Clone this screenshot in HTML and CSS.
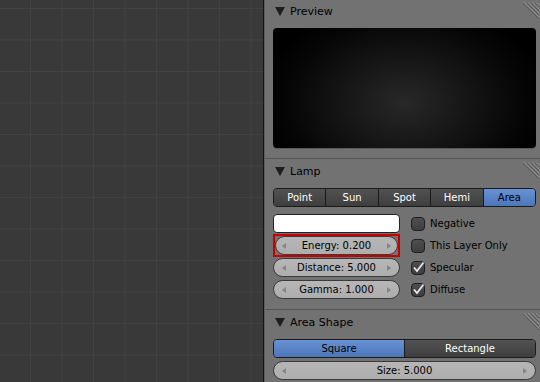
FILE: index.html
```html
<!DOCTYPE html>
<html>
<head>
    <meta charset="utf-8">
    <title>lamp-properties</title>
    <link rel="stylesheet" href="styles.css">
</head>
<body>
<div class="screen">
    <div class="viewport"></div>

    <div class="props">
        <!--Preview-->
        <section class="panel">
            <div class="panel-head">
                <svg class="tri" width="10" height="9" viewBox="0 0 10 9"><polygon points="0,0 10,0 5,9" fill="#1e1e1e"/></svg>
                <span>Preview</span>
                <svg class="hatch" width="18" height="17" viewBox="0 0 18 17">
                    <g stroke="#8e8e8e" stroke-width="1">
                        <line x1="2" y1="0" x2="18" y2="16"/>
                        <line x1="6" y1="0" x2="18" y2="12"/>
                        <line x1="10" y1="0" x2="18" y2="8"/>
                        <line x1="14" y1="0" x2="18" y2="4"/>
                    </g>
                    <g stroke="#5c5c5c" stroke-width="1">
                        <line x1="1" y1="1" x2="17" y2="17"/>
                        <line x1="5" y1="1" x2="17" y2="13"/>
                        <line x1="9" y1="1" x2="17" y2="9"/>
                        <line x1="13" y1="1" x2="17" y2="5"/>
                    </g>
                </svg>
            </div>
            <div class="preview"></div>
        </section>

        <!--Lamp-->
        <section class="panel lamp">
            <div class="panel-head">
                <svg class="tri" width="10" height="9" viewBox="0 0 10 9"><polygon points="0,0 10,0 5,9" fill="#1e1e1e"/></svg>
                <span>Lamp</span>
                <svg class="hatch" width="18" height="17" viewBox="0 0 18 17">
                    <g stroke="#8e8e8e" stroke-width="1">
                        <line x1="2" y1="0" x2="18" y2="16"/>
                        <line x1="6" y1="0" x2="18" y2="12"/>
                        <line x1="10" y1="0" x2="18" y2="8"/>
                        <line x1="14" y1="0" x2="18" y2="4"/>
                    </g>
                    <g stroke="#5c5c5c" stroke-width="1">
                        <line x1="1" y1="1" x2="17" y2="17"/>
                        <line x1="5" y1="1" x2="17" y2="13"/>
                        <line x1="9" y1="1" x2="17" y2="9"/>
                        <line x1="13" y1="1" x2="17" y2="5"/>
                    </g>
                </svg>
            </div>
            <div class="tabs">
                <div class="tab">Point</div>
                <div class="tab">Sun</div>
                <div class="tab">Spot</div>
                <div class="tab">Hemi</div>
                <div class="tab on">Area</div>
            </div>
            <div class="lamp-grid">
                <div class="color"></div>
                <label class="opt"><span class="box"></span>Negative</label>

                <div class="hot">
                    <div class="num"><span class="arr-l"></span><span class="val">Energy: 0.200</span><span class="arr-r"></span></div>
                </div>
                <label class="opt"><span class="box"></span>This Layer Only</label>

                <div class="num"><span class="arr-l"></span><span class="val">Distance: 5.000</span><span class="arr-r"></span></div>
                <label class="opt"><span class="box"><svg width="14" height="14" viewBox="0 0 14 14"><path d="M3 6.5 L6 10 L12.5 1.5" fill="none" stroke="#e6e6e6" stroke-width="1.8"/></svg></span>Specular</label>

                <div class="num"><span class="arr-l"></span><span class="val">Gamma: 1.000</span><span class="arr-r"></span></div>
                <label class="opt"><span class="box"><svg width="14" height="14" viewBox="0 0 14 14"><path d="M3 6.5 L6 10 L12.5 1.5" fill="none" stroke="#e6e6e6" stroke-width="1.8"/></svg></span>Diffuse</label>
            </div>
        </section>

        <!--Area Shape-->
        <section class="panel">
            <div class="panel-head">
                <svg class="tri" width="10" height="9" viewBox="0 0 10 9"><polygon points="0,0 10,0 5,9" fill="#1e1e1e"/></svg>
                <span>Area Shape</span>
                <svg class="hatch" width="18" height="17" viewBox="0 0 18 17">
                    <g stroke="#8e8e8e" stroke-width="1">
                        <line x1="2" y1="0" x2="18" y2="16"/>
                        <line x1="6" y1="0" x2="18" y2="12"/>
                        <line x1="10" y1="0" x2="18" y2="8"/>
                        <line x1="14" y1="0" x2="18" y2="4"/>
                    </g>
                    <g stroke="#5c5c5c" stroke-width="1">
                        <line x1="1" y1="1" x2="17" y2="17"/>
                        <line x1="5" y1="1" x2="17" y2="13"/>
                        <line x1="9" y1="1" x2="17" y2="9"/>
                        <line x1="13" y1="1" x2="17" y2="5"/>
                    </g>
                </svg>
            </div>
            <div class="tabs">
                <div class="tab on">Square</div>
                <div class="tab">Rectangle</div>
            </div>
            <div class="num size"><span class="arr-l"></span><span class="val">Size: 5.000</span><span class="arr-r"></span></div>
        </section>
    </div>
</div>
</body>
</html>
```
FILE: styles.css
```css
body{
    margin:0;
    background:#727272;
    font-family:"DejaVu Sans", "Liberation Sans", sans-serif;
    font-size:10px;
    color:#000;
    overflow:hidden;
}
.screen{
    display:flex;
    height:382px;
    overflow:hidden;
}
/*3D view grid*/
.viewport{
    width:263px;
    flex:none;
    border-right:1px solid #141414;
    background-color:#393939;
    background-image:
        linear-gradient(to right, #424242 1px, transparent 1px),
        linear-gradient(to bottom, #424242 1px, transparent 1px);
    background-size:31.5px 31.5px;
    background-position:30px 8px;
}
.props{
    flex:1;
    border-left:1px solid #5e5e5e;
    margin-top:-2px;
}
/*panels*/
.panel{
    border-top:1px solid #545454;
    padding:0 4px 10px 8px;
}
.panel.lamp{
    padding-bottom:10px;
}
.panel-head{
    display:flex;
    align-items:center;
    height:24px;
    margin-bottom:5px;
    font-size:11px;
    color:#000;
}
.tri{
    margin-left:2px;
    margin-right:5px;
}
.hatch{
    margin-left:auto;
    margin-right:-4px;
    align-self:flex-start;
    margin-top:3px;
}
.preview{
    height:120px;
    border-radius:4px;
    background:radial-gradient(ellipse 55% 85% at 50% 62%, #282828 0%, #151515 45%, #060606 80%, #000 100%);
    box-shadow:0 1px 0 #5a5a5a;
}
/*radio tabs*/
.tabs{
    display:flex;
    height:19px;
    border:1px solid #1a1a1a;
    border-radius:4px;
    overflow:hidden;
    box-sizing:border-box;
}
.tab{
    flex:1;
    display:flex;
    align-items:center;
    justify-content:center;
    color:#fff;
    background:linear-gradient(#525252, #3e3e3e);
    border-left:1px solid #1a1a1a;
}
.tab:first-child{
    border-left:none;
}
.tab.on{
    color:#000;
    background:linear-gradient(#6892d4, #4b76b9);
}
.lamp-grid{
    display:grid;
    grid-template-columns:127px 1fr;
    grid-auto-rows:19px;
    column-gap:11px;
    row-gap:3px;
    margin-top:7px;
}
.color{
    background:#fff;
    border:1px solid #222;
    border-radius:4px;
}
/*number fields*/
.num{
    display:flex;
    align-items:center;
    padding:0 6px;
    height:19px;
    box-sizing:border-box;
    border:1px solid #3a3a3a;
    border-radius:10px;
    background:linear-gradient(#b6b6b6, #aeaeae);
}
.val{
    flex:1;
    text-align:center;
}
.arr-l{
    width:0;
    height:0;
    border-top:3px solid transparent;
    border-bottom:3px solid transparent;
    border-right:4px solid #858585;
    margin-left:2px;
}
.arr-r{
    width:0;
    height:0;
    border-top:3px solid transparent;
    border-bottom:3px solid transparent;
    border-left:4px solid #858585;
    margin-right:2px;
}
.hot{
    border:2px solid #c80000;
    margin:-2px 0;
}
.hot .num{
    height:100%;
    padding:0 4px;
}
.size{
    margin-top:3px;
}
/*checkboxes*/
.opt{
    display:flex;
    align-items:center;
    margin-left:0;
}
.box{
    width:14px;
    height:14px;
    box-sizing:border-box;
    border:1px solid #1e1e1e;
    border-radius:4px;
    background:linear-gradient(#4e4e4e, #3e3e3e);
    margin-right:5px;
    display:flex;
    align-items:center;
    justify-content:center;
    overflow:visible;
}
.box svg{
    flex:none;
}
```
